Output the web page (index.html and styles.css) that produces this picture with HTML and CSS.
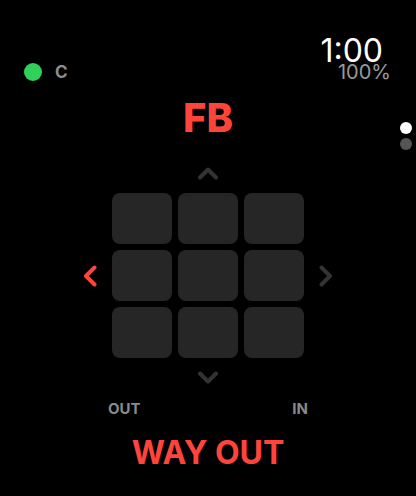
FILE: index.html
```html
<!DOCTYPE html>
<html>
<head>
<meta charset="utf-8">
<link rel="stylesheet" href="styles.css">
</head>
<body>
<div class="screen">
  <div class="status">
    <div class="conn">
      <span class="dot"></span>
      <span class="conn-label">C</span>
    </div>
    <div class="clock">
      <div class="time">1:00</div>
      <div class="battery">100%</div>
    </div>
  </div>
  <div class="title">FB</div>
  <div class="pad">
    <div class="arrow up">
      <svg width="22" height="13" viewBox="0 0 22 13"><polyline points="3,10.5 11,2.5 19,10.5" fill="none" stroke="#333" stroke-width="4" stroke-linecap="round" stroke-linejoin="round"/></svg>
    </div>
    <div class="arrow left">
      <svg width="14" height="22" viewBox="0 0 14 22"><polyline points="11.5,2.5 3,11 11.5,19.5" fill="none" stroke="#ff453a" stroke-width="4" stroke-linecap="round" stroke-linejoin="round"/></svg>
    </div>
    <div class="cells">
      <div class="cell"></div><div class="cell"></div><div class="cell"></div>
      <div class="cell"></div><div class="cell"></div><div class="cell"></div>
      <div class="cell"></div><div class="cell"></div><div class="cell"></div>
    </div>
    <div class="arrow right">
      <svg width="14" height="22" viewBox="0 0 14 22"><polyline points="2.5,2.5 11,11 2.5,19.5" fill="none" stroke="#333" stroke-width="4" stroke-linecap="round" stroke-linejoin="round"/></svg>
    </div>
    <div class="arrow down">
      <svg width="22" height="13" viewBox="0 0 22 13"><polyline points="3,2.5 11,10.5 19,2.5" fill="none" stroke="#333" stroke-width="4" stroke-linecap="round" stroke-linejoin="round"/></svg>
    </div>
  </div>
  <div class="labels">
    <span>OUT</span>
    <span>IN</span>
  </div>
  <div class="action">WAY OUT</div>
  <div class="pager">
    <span class="pdot active"></span>
    <span class="pdot"></span>
  </div>
</div>
</body>
</html>
```
FILE: styles.css
```css
html, body {
  margin: 0;
  padding: 0;
  background: #000;
}
.screen {
  position: relative;
  width: 416px;
  height: 496px;
  overflow: hidden;
  font-family: Inter, "Liberation Sans", sans-serif;
  color: #fff;
}
.status {
  height: 82px;
  display: flex;
  justify-content: space-between;
  align-items: flex-start;
  padding: 0 25px 0 24px;
  box-sizing: border-box;
}
.conn {
  margin-top: 63px;
  display: flex;
  align-items: center;
  gap: 13px;
}
.dot {
  width: 18px;
  height: 18px;
  border-radius: 50%;
  background: #30d158;
}
.conn-label {
  font-size: 17px;
  font-weight: 700;
  color: #8e8e8e;
  line-height: 18px;
}
.clock {
  margin-top: 38px;
  display: flex;
  flex-direction: column;
  align-items: flex-end;
}
.time {
  font-size: 32px;
  line-height: 25px;
  font-weight: 400;
  color: #fff;
  margin-right: 8px;
}
.battery {
  margin-top: 1px;
  font-size: 20px;
  line-height: 16px;
  color: #9a9a9a;
}
.title {
  margin-top: 16px;
  text-align: center;
  font-size: 40px;
  line-height: 40px;
  font-weight: 800;
  color: #ff453a;
}
.pad {
  margin-top: 29px;
  display: grid;
  grid-template-columns: 32px 192px 32px;
  grid-template-rows: 20px 165px 20px;
  column-gap: 6px;
  row-gap: 6px;
  justify-content: center;
}
.arrow {
  display: flex;
  justify-content: center;
}
.arrow svg { display: block; }
.up { grid-column: 2; grid-row: 1; align-items: flex-start; }
.down { grid-column: 2; grid-row: 3; align-items: flex-end; }
.left { grid-column: 1; grid-row: 2; align-items: center; }
.right { grid-column: 3; grid-row: 2; align-items: center; }
.cells {
  grid-column: 2;
  grid-row: 2;
  display: grid;
  grid-template-columns: repeat(3, 60px);
  grid-template-rows: repeat(3, 51px);
  gap: 6px;
}
.cell {
  background: #262626;
  border-radius: 8px;
}
.labels {
  margin: 17px auto 0;
  width: 200px;
  display: flex;
  justify-content: space-between;
  font-size: 15px;
  line-height: 16px;
  font-weight: 700;
  color: #8a8a8a;
}
.action {
  margin-top: 20px;
  text-align: center;
  font-size: 32px;
  line-height: 32px;
  font-weight: 700;
  color: #ff453a;
}
.pager {
  position: absolute;
  left: 400px;
  top: 122px;
  display: flex;
  flex-direction: column;
  gap: 4px;
}
.pdot {
  width: 12px;
  height: 12px;
  border-radius: 50%;
  background: #555;
}
.pdot.active { background: #fff; }
```
